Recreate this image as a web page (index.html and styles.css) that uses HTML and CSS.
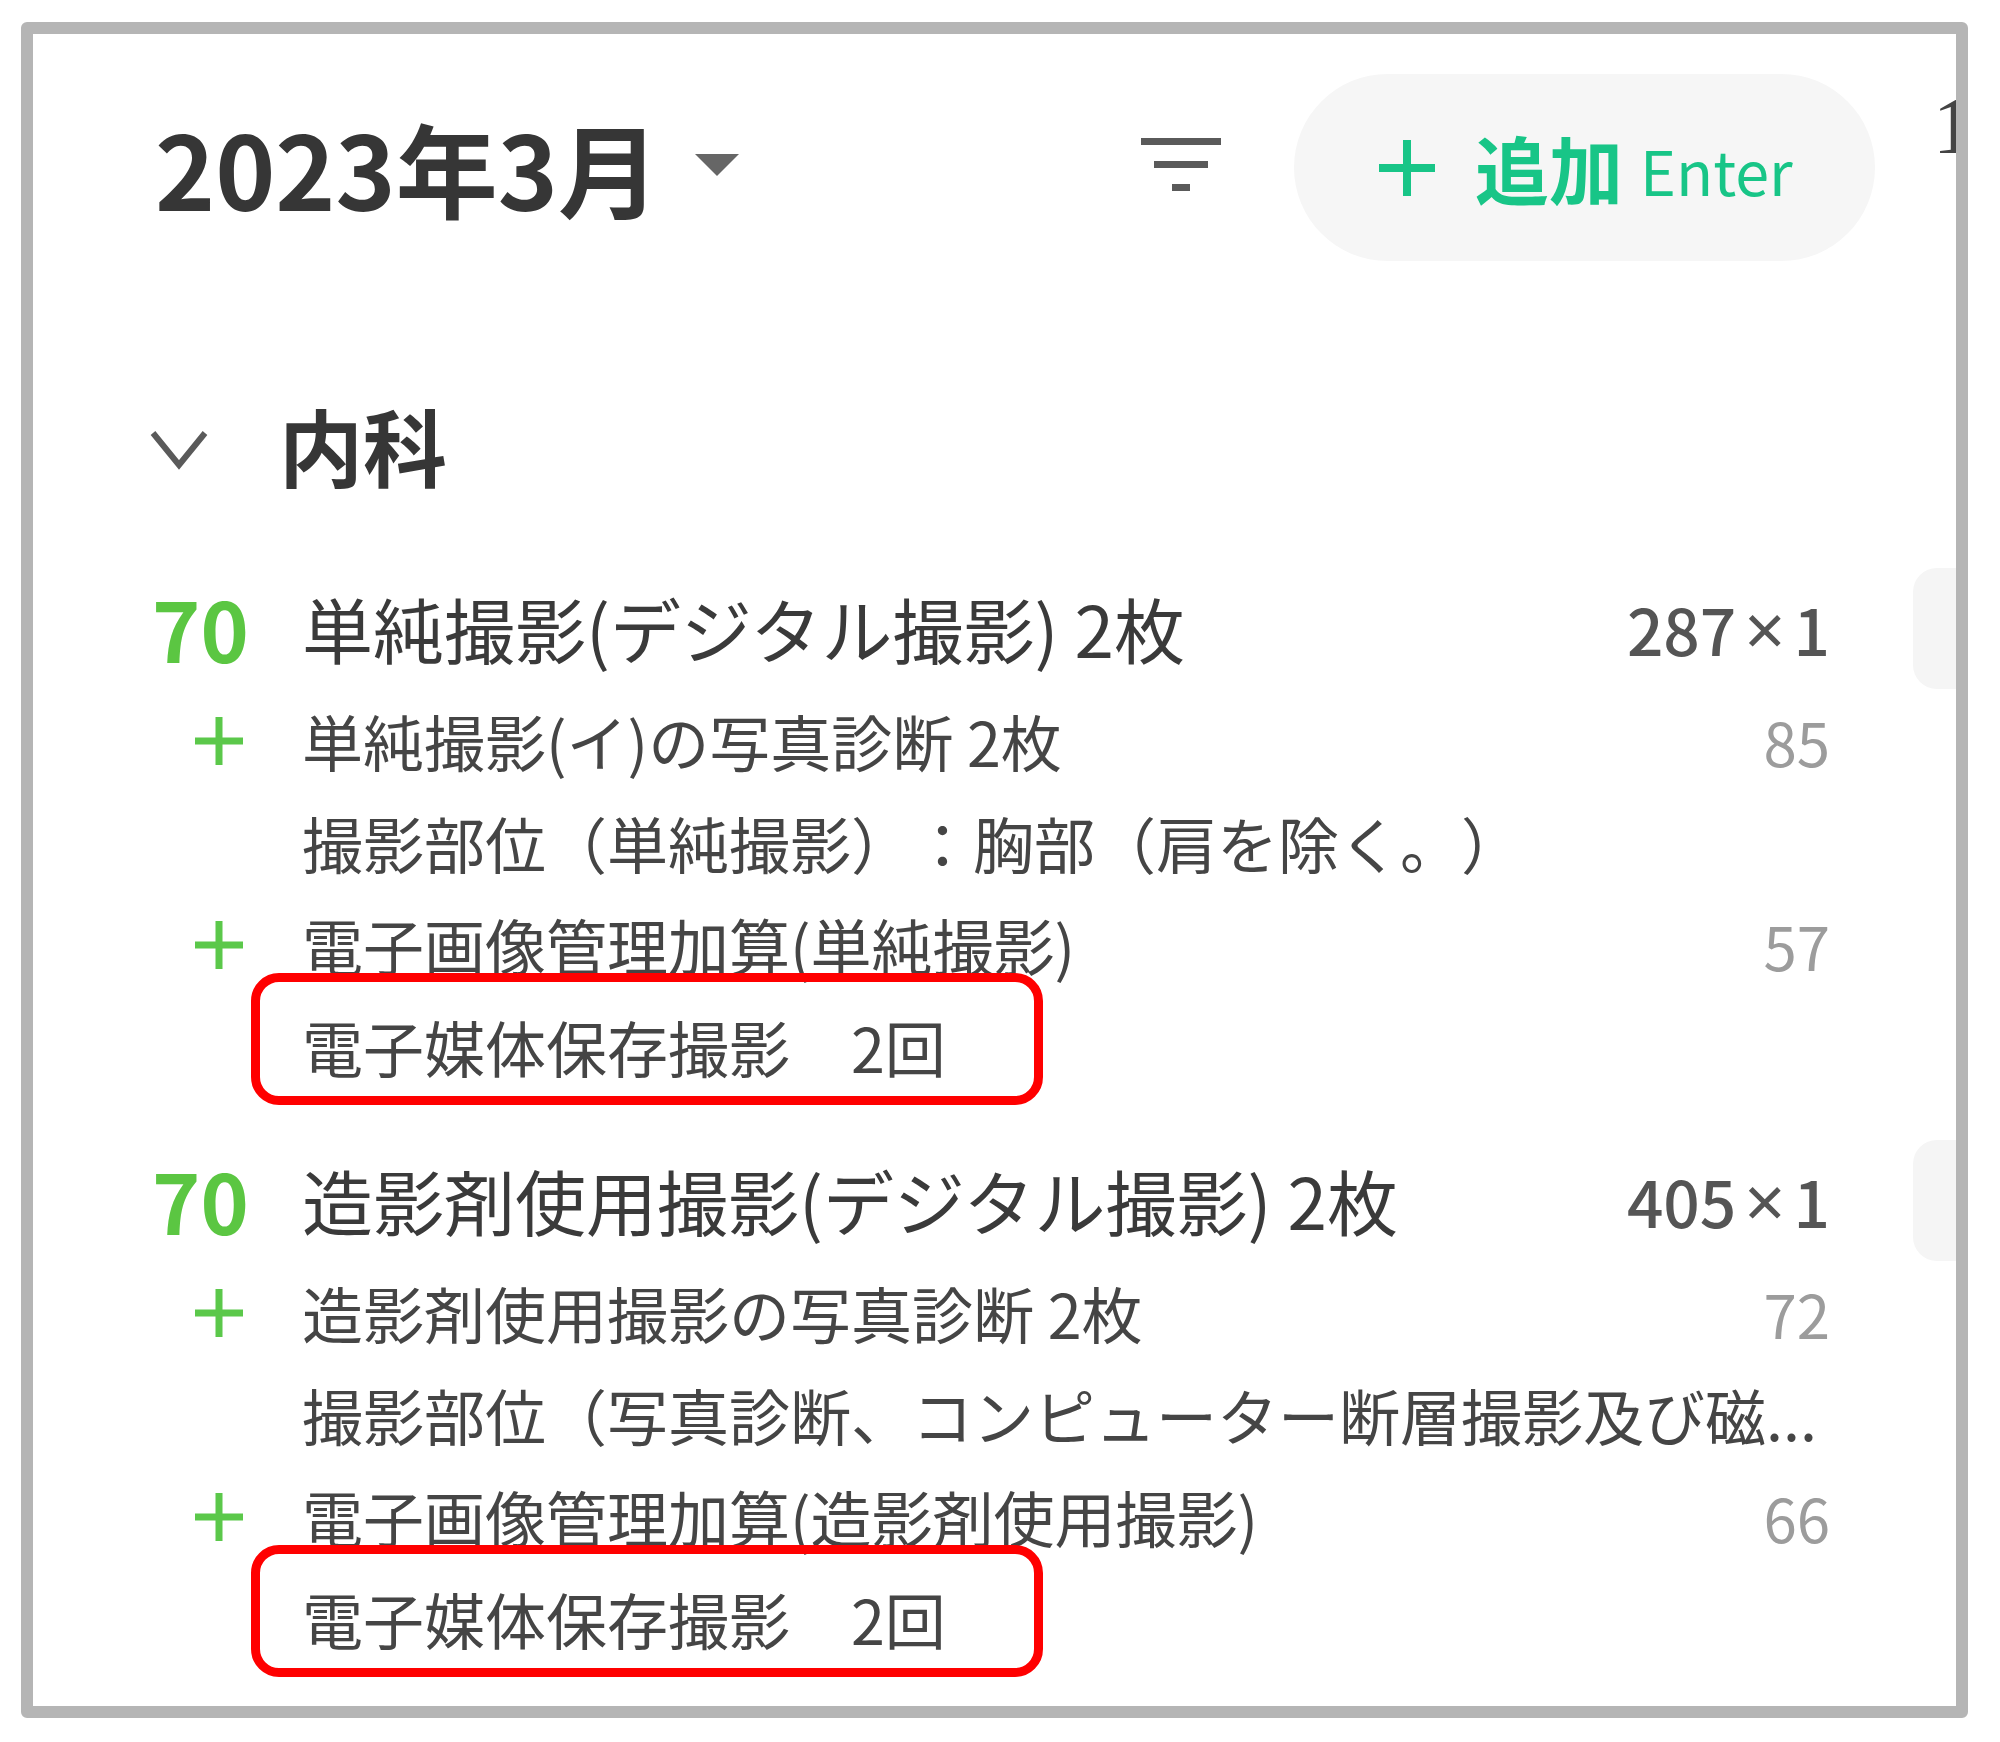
FILE: index.html
```html
<!DOCTYPE html>
<html lang="ja">
<head>
<meta charset="utf-8">
<title>2023年3月</title>
<link rel="stylesheet" href="styles.css">
</head>
<body>
<div class="frame">
  <div class="panel">
    <header class="topbar">
      <div class="month">
        <span class="month-label">2023年3月</span>
        <svg class="caret" viewBox="0 0 44 22" aria-hidden="true"><path d="M0 0H44L22 22Z"/></svg>
      </div>
      <svg class="filter" viewBox="0 0 80 54" aria-hidden="true">
        <rect x="0" y="0" width="80" height="7"/>
        <rect x="13" y="23" width="54" height="7"/>
        <rect x="31" y="46" width="18" height="7"/>
      </svg>
      <button class="add-btn" type="button">
        <svg class="add-plus" viewBox="0 0 60 60" aria-hidden="true"><path d="M30 2V58M2 30H58"/></svg>
        <span class="add-label">追加</span>
        <span class="add-key">Enter</span>
      </button>
      <span class="edge-digit">1</span>
    </header>

    <section class="dept">
      <div class="dept-head">
        <svg class="chev" viewBox="0 0 58 41" aria-hidden="true"><path d="M3 4L29 36L55 4"/></svg>
        <h2 class="dept-name">内科</h2>
      </div>

      <div class="items">
        <div class="item">
          <div class="row main">
            <span class="pts">70</span>
            <span class="name">単純撮影(デジタル撮影) 2枚</span>
            <span class="val">287<span class="times">×</span>1</span>
            <span class="row-action"></span>
          </div>
          <div class="row sub">
            <svg class="plus" viewBox="0 0 48 48" aria-hidden="true"><path d="M24 0V48M0 24H48"/></svg>
            <span class="name">単純撮影(イ)の写真診断 2枚</span>
            <span class="val">85</span>
          </div>
          <div class="row sub">
            <span class="name wide">撮影部位（単純撮影）：胸部（肩を除く。）</span>
          </div>
          <div class="row sub">
            <svg class="plus" viewBox="0 0 48 48" aria-hidden="true"><path d="M24 0V48M0 24H48"/></svg>
            <span class="name">電子画像管理加算(単純撮影)</span>
            <span class="val">57</span>
          </div>
          <div class="row sub marked">
            <span class="name wide">電子媒体保存撮影　2回</span>
            <span class="mark"></span>
          </div>
        </div>

        <div class="item">
          <div class="row main">
            <span class="pts">70</span>
            <span class="name">造影剤使用撮影(デジタル撮影) 2枚</span>
            <span class="val">405<span class="times">×</span>1</span>
            <span class="row-action"></span>
          </div>
          <div class="row sub">
            <svg class="plus" viewBox="0 0 48 48" aria-hidden="true"><path d="M24 0V48M0 24H48"/></svg>
            <span class="name">造影剤使用撮影の写真診断 2枚</span>
            <span class="val">72</span>
          </div>
          <div class="row sub">
            <span class="name wide">撮影部位（写真診断、コンピューター断層撮影及び磁...</span>
          </div>
          <div class="row sub">
            <svg class="plus" viewBox="0 0 48 48" aria-hidden="true"><path d="M24 0V48M0 24H48"/></svg>
            <span class="name">電子画像管理加算(造影剤使用撮影)</span>
            <span class="val">66</span>
          </div>
          <div class="row sub marked">
            <span class="name wide">電子媒体保存撮影　2回</span>
            <span class="mark"></span>
          </div>
        </div>
      </div>
    </section>
  </div>
</div>
</body>
</html>
```

FILE: styles.css
```css
* { box-sizing: border-box; }

html, body {
  margin: 0;
  padding: 0;
  background: #ffffff;
}

body {
  font-family: "Noto Sans CJK JP", "Noto Sans", sans-serif;
  color: #3d3d3d;
  text-spacing-trim: space-all;
}

.frame {
  margin: 22px 0 0 21px;
  width: 1947px;
  height: 1696px;
  border: 12px solid #b5b5b5;
  border-radius: 6px;
  overflow: hidden;
  background: #ffffff;
}

.panel {
  padding-top: 40px;
}

/* ---------- top bar ---------- */
.topbar {
  display: flex;
  align-items: center;
  padding-left: 122px;
}

.month {
  flex: 1 1 auto;
  display: flex;
  align-items: center;
  gap: 35px;
}

.month-label {
  font-size: 102px;
  font-weight: 700;
  line-height: 1.2;
  color: #363636;
}

.caret {
  width: 44px;
  height: 22px;
  fill: #666666;
  margin-top: -4px;
}

.filter {
  flex: 0 0 auto;
  width: 80px;
  height: 54px;
  fill: #5a5a5a;
  margin-right: 73px;
  margin-top: -6px;
}

.add-btn {
  flex: 0 0 auto;
  width: 581px;
  height: 187px;
  border: none;
  border-radius: 94px;
  background: #f6f6f6;
  display: flex;
  align-items: center;
  padding: 0 0 0 83px;
  font-family: inherit;
  color: #18c587;
}

.add-plus {
  width: 60px;
  height: 60px;
  stroke: #18c587;
  stroke-width: 8;
  fill: none;
  flex: 0 0 auto;
}

.add-label {
  margin-left: 38px;
  font-size: 74px;
  font-weight: 700;
  line-height: 1.2;
}

.add-key {
  margin-left: 17px;
  font-size: 61px;
  font-weight: 400;
  line-height: 1.2;
  margin-top: 4px;
}

.edge-digit {
  flex: 0 0 auto;
  width: 23px;
  margin-left: 58px;
  align-self: flex-start;
  margin-top: 12px;
  font-family: "Liberation Serif", serif;
  font-size: 80px;
  line-height: 80px;
  color: #444444;
  white-space: nowrap;
  overflow: visible;
}

/* ---------- department ---------- */
.dept-head {
  margin-top: 128px;
  height: 120px;
  display: flex;
  align-items: center;
  padding-left: 117px;
}

.chev {
  width: 58px;
  height: 41px;
  fill: none;
  stroke: #5a5a5a;
  stroke-width: 6;
  flex: 0 0 auto;
}

.dept-name {
  margin: 0 0 8px 71px;
  font-size: 84px;
  font-weight: 700;
  line-height: 1.2;
  color: #363636;
}

.items {
  margin-top: 54px;
  padding-left: 117px;
}

.item {
  margin-bottom: 34px;
}

.row {
  display: grid;
  grid-template-columns: 152px 1fr auto 126px;
  align-items: center;
  white-space: nowrap;
}

.row.main {
  height: 130px;
}

.row.sub {
  height: 102px;
  padding-bottom: 6px;
}

.pts {
  grid-column: 1;
  font-size: 82px;
  font-weight: 700;
  line-height: 1.2;
  color: #5bc642;
  margin-left: 2px;
}

.plus {
  grid-column: 1;
  width: 48px;
  height: 48px;
  margin-left: 45px;
  stroke: #5bc84a;
  stroke-width: 7;
  fill: none;
}

.name {
  grid-column: 2;
  line-height: 1.4;
}

.name.wide {
  grid-column: 2 / 4;
}

.main .name {
  font-size: 71px;
  color: #3a3a3a;
}

.sub .name {
  font-size: 61px;
  color: #454545;
}

.val {
  grid-column: 3;
  text-align: right;
  line-height: 1.4;
}

.main .val {
  font-size: 64px;
  font-weight: 500;
  color: #555555;
}

.times {
  font-family: "Noto Sans", sans-serif;
  font-weight: 400;
  font-size: 72px;
  margin: 0 8px 0 8px;
}

.sub .val {
  font-size: 60px;
  color: #9c9c9c;
}

.row-action {
  grid-column: 4;
  width: 120px;
  height: 121px;
  margin-left: 83px;
  border-radius: 24px;
  background: #f5f5f5;
}

/* annotation box drawn over the row */
.marked {
  position: relative;
}

.mark {
  position: absolute;
  left: 101px;
  top: -26px;
  width: 792px;
  height: 132px;
  border: 9px solid #ff0000;
  border-radius: 28px;
  pointer-events: none;
}
```
